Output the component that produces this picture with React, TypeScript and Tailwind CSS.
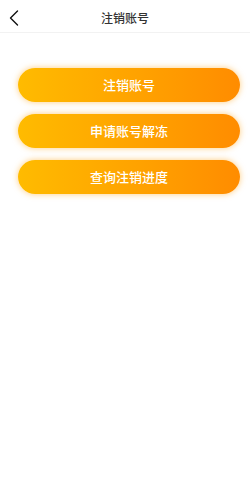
import React from 'react';

const items = ['注销账号', '申请账号解冻', '查询注销进度'];

export default function App() {
  return (
    <div
      className="w-[250px] h-[500px] bg-white"
      style={{ fontFamily: '"Noto Sans CJK SC", "Noto Sans", sans-serif' }}
    >
      {/* header */}
      <div className="relative h-[33px] flex items-center justify-center pt-[3px] border-b border-[#f2f2f2]">
        <button className="absolute left-[8px] top-[10px] w-[12px] h-[16px] flex items-center justify-center">
          <svg width="10" height="16" viewBox="0 0 10 16" fill="none">
            <path d="M8.5 1 L1.5 8 L8.5 15" stroke="#111" strokeWidth="1.4" strokeLinecap="round" strokeLinejoin="round" />
          </svg>
        </button>
        <span className="text-[12px] font-medium text-[#333] leading-none">注销账号</span>
      </div>

      {/* actions */}
      <div className="flex flex-col gap-[12px] px-[18px] pt-[35px]">
        {items.map(t => (
          <button
            key={t}
            className="h-[34px] w-[222px] rounded-full bg-gradient-to-r from-[#ffbb00] to-[#ff8c00] text-white text-[13px] font-medium shadow-[0_0_6px_rgba(255,170,40,0.6)]"
          >
            {t}
          </button>
        ))}
      </div>
    </div>
  );
}
